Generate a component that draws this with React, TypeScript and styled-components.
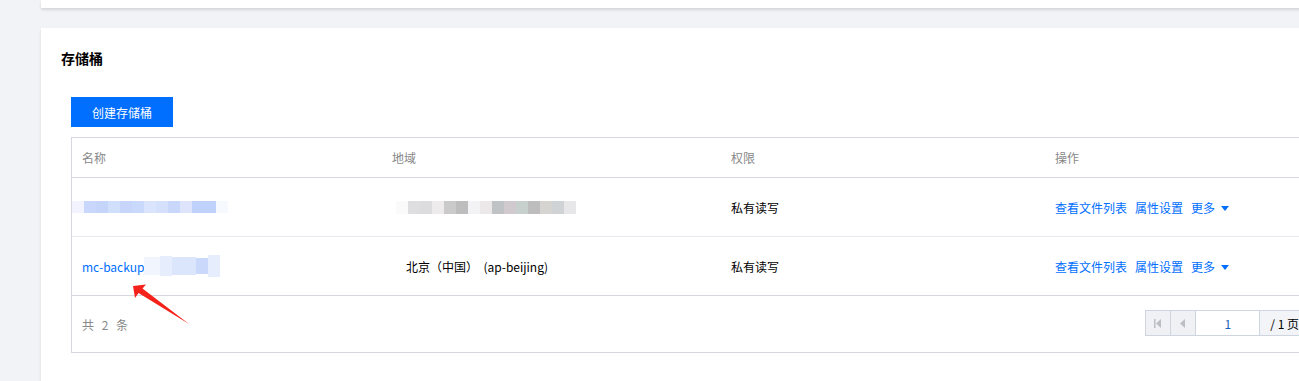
import React from "react";
import styled, { createGlobalStyle } from "styled-components";

const Global = createGlobalStyle`
  html, body { margin: 0; padding: 0; }
  body {
    background: #f2f3f6;
    overflow: hidden;
    font-family: "Noto Sans CJK SC", "Noto Sans", sans-serif;
    font-size: 12px;
    color: #000;
  }
`;

const Page = styled.div`
  width: 1400px;
  height: 381px;
  overflow: hidden;
  padding-left: 41px;
  display: flex;
  flex-direction: column;
  gap: 20px;
  box-sizing: border-box;
`;

const TopCard = styled.div`
  height: 8px;
  flex: none;
  background: #fff;
  box-shadow: 0 2px 3px rgba(0, 0, 0, 0.12);
`;

const Card = styled.div`
  position: relative;
  flex: 1;
  background: #fff;
  box-shadow: 0 2px 3px rgba(0, 0, 0, 0.1);
  padding: 20px 20px 0 20px;
  box-sizing: border-box;
`;

const Title = styled.h2`
  margin: 0;
  font-size: 14px;
  line-height: 20px;
  font-weight: 700;
  color: #000;
`;

const Body = styled.div`
  margin: 29px 0 0 10px;
  display: flex;
  flex-direction: column;
  gap: 10px;
`;

const PrimaryButton = styled.button`
  width: 102px;
  height: 30px;
  border: none;
  background: #006eff;
  color: #fff;
  font-family: inherit;
  font-size: 12px;
  padding: 0;
  cursor: pointer;
`;

const Table = styled.div`
  width: 1302px;
  border: 1px solid #d5d8df;
  box-sizing: border-box;
`;

const COLS = "310px 339px 324px 1fr";

const HeadRow = styled.div`
  display: grid;
  grid-template-columns: ${COLS};
  height: 40px;
  align-items: center;
  border-bottom: 1px solid #d5d8df;
  box-sizing: border-box;
`;

const Row = styled.div`
  display: grid;
  grid-template-columns: ${COLS};
  height: 59px;
  align-items: center;
  border-bottom: 1px solid ${(p) => (p.$last ? "#d5d8df" : "#e8e9ee")};
  box-sizing: border-box;
`;

const HeadCell = styled.div`
  padding-left: 10px;
  color: #888;
`;

const Cell = styled.div`
  padding-left: ${(p) => p.$indent ?? 10}px;
  display: flex;
  align-items: center;
  white-space: pre;
`;

const Link = styled.a`
  color: #006eff;
  text-decoration: none;
  cursor: pointer;
`;

const Actions = styled.div`
  display: flex;
  align-items: center;
  gap: 8px;
`;

const Caret = styled.span`
  display: inline-block;
  width: 0;
  height: 0;
  margin-left: 6px;
  border-left: 4px solid transparent;
  border-right: 4px solid transparent;
  border-top: 5px solid #006eff;
  vertical-align: middle;
  position: relative;
  top: -1px;
`;

const Mosaic = styled.div`
  display: flex;
  align-items: center;
  margin-left: ${(p) => p.$offset ?? 0}px;
`;

const Tile = styled.div`
  width: ${(p) => p.$w ?? 12}px;
  height: ${(p) => p.$h ?? 12}px;
  background: ${(p) => p.$c};
`;

const Footer = styled.div`
  display: flex;
  justify-content: space-between;
  align-items: center;
  height: 56px;
  padding: 0 10px;
`;

const Total = styled.span`
  color: #888;
  word-spacing: 5px;
`;

const Pager = styled.div`
  display: flex;
  height: 26px;
  border: 1px solid #cfd5de;
  box-sizing: border-box;
  margin-top: -2px;
`;

const PagerBtn = styled.div`
  width: 24px;
  display: flex;
  align-items: center;
  justify-content: center;
  background: #f0f1f4;
  border-left: ${(p) => (p.$first ? "none" : "1px solid #cfd5de")};
`;

const PageInput = styled.div`
  width: 63px;
  display: flex;
  align-items: center;
  justify-content: center;
  background: #fff;
  border-left: 1px solid #cfd5de;
  color: #1a5fb4;
`;

const PageLabel = styled.div`
  padding: 0 12px 0 10px;
  display: flex;
  align-items: center;
  background: #f3f4f7;
  border-left: 1px solid #cfd5de;
  white-space: nowrap;
`;

const ArrowSvg = styled.svg`
  position: absolute;
  left: 79px;
  top: 247px;
  pointer-events: none;
`;

const nameTiles = [
  "#f2f3fe", "#c9d7fc", "#c5d5fa", "#cfdffc", "#c8d5fa", "#c9d9fb",
  "#dae5fd", "#d4e0fc", "#c8d7fa", "#dde4fb", "#bed2fb", "#bed2fb", "#f6faff",
];
const regionTiles = [
  "#fafafa", "#dedee0", "#dcdcde", "#eeebec", "#cacaca", "#bdbdbd", "#f3f3f5",
  "#ece8ea", "#bfc3c5", "#d0c9ce", "#c8d0ce", "#bebdbd", "#d5d4d0", "#d0d3d6", "#e7e7e9",
];
const tailTiles = [
  { c: "#f1f5fe", w: 16, h: 18 },
  { c: "#e6edfd", w: 12, h: 20 },
  { c: "#dbe5fc", w: 24, h: 18 },
  { c: "#c9d8fb", w: 12, h: 16 },
  { c: "#e6edfd", w: 12, h: 22 },
];

function FirstIcon() {
  return (
    <svg width="8" height="9" viewBox="0 0 8 9">
      <rect x="0" y="0" width="1.5" height="9" fill="#bbbec4" />
      <path d="M7 0 L2 4.5 L7 9 Z" fill="#bbbec4" />
    </svg>
  );
}
function PrevIcon() {
  return (
    <svg width="6" height="9" viewBox="0 0 6 9">
      <path d="M5 0 L0 4.5 L5 9 Z" fill="#bbbec4" />
    </svg>
  );
}

function Operations() {
  return (
    <Actions>
      <Link>查看文件列表</Link>
      <Link>属性设置</Link>
      <Link>
        更多
        <Caret />
      </Link>
    </Actions>
  );
}

export default function App() {
  return (
    <>
      <Global />
      <Page>
        <TopCard />
        <Card>
          <Title>存储桶</Title>
          <Body>
            <div>
              <PrimaryButton>创建存储桶</PrimaryButton>
            </div>
            <Table>
              <HeadRow>
                <HeadCell>名称</HeadCell>
                <HeadCell>地域</HeadCell>
                <HeadCell>权限</HeadCell>
                <HeadCell>操作</HeadCell>
              </HeadRow>
              <Row>
                <Cell>
                  <Mosaic $offset={-10}>
                    {nameTiles.map((c, i) => (
                      <Tile key={i} $c={c} />
                    ))}
                  </Mosaic>
                </Cell>
                <Cell>
                  <Mosaic $offset={4}>
                    {regionTiles.map((c, i) => (
                      <Tile key={i} $c={c} $h={13} />
                    ))}
                  </Mosaic>
                </Cell>
                <Cell>私有读写</Cell>
                <Cell>
                  <Operations />
                </Cell>
              </Row>
              <Row $last>
                <Cell>
                  <Link>mc-backup</Link>
                  <Mosaic>
                    {tailTiles.map((t, i) => (
                      <Tile key={i} $c={t.c} $w={t.w} $h={t.h} />
                    ))}
                  </Mosaic>
                </Cell>
                <Cell $indent={24}>北京（中国）  (ap-beijing)</Cell>
                <Cell>私有读写</Cell>
                <Cell>
                  <Operations />
                </Cell>
              </Row>
              <Footer>
                <Total>共 2 条</Total>
                <Pager>
                  <PagerBtn $first>
                    <FirstIcon />
                  </PagerBtn>
                  <PagerBtn>
                    <PrevIcon />
                  </PagerBtn>
                  <PageInput>1</PageInput>
                  <PageLabel>/ 1 页</PageLabel>
                  <PagerBtn>
                    <svg width="6" height="9" viewBox="0 0 6 9">
                      <path d="M1 0 L6 4.5 L1 9 Z" fill="#bbbec4" />
                    </svg>
                  </PagerBtn>
                  <PagerBtn>
                    <svg width="8" height="9" viewBox="0 0 8 9">
                      <path d="M1 0 L6 4.5 L1 9 Z" fill="#bbbec4" />
                      <rect x="6.5" y="0" width="1.5" height="9" fill="#bbbec4" />
                    </svg>
                  </PagerBtn>
                </Pager>
              </Footer>
            </Table>
          </Body>
          <ArrowSvg width="80" height="55" viewBox="0 0 80 55">
            <polygon
              points="13,11 26,9.5 22.5,13.5 69,49 18.5,18 15,23"
              fill="#f5221b"
            />
          </ArrowSvg>
        </Card>
      </Page>
    </>
  );
}
